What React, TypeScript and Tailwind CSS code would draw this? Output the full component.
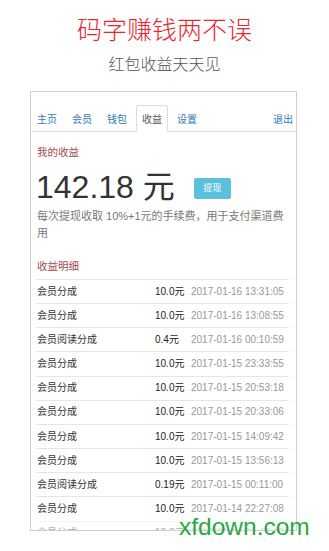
import React from 'react'

const rows = [
  { name: '会员分成', amount: '10.0元', time: '2017-01-16 13:31:05' },
  { name: '会员分成', amount: '10.0元', time: '2017-01-16 13:08:55' },
  { name: '会员阅读分成', amount: '0.4元', time: '2017-01-16 00:10:59' },
  { name: '会员分成', amount: '10.0元', time: '2017-01-15 23:33:55' },
  { name: '会员分成', amount: '10.0元', time: '2017-01-15 20:53:18' },
  { name: '会员分成', amount: '10.0元', time: '2017-01-15 20:33:06' },
  { name: '会员分成', amount: '10.0元', time: '2017-01-15 14:09:42' },
  { name: '会员分成', amount: '10.0元', time: '2017-01-15 13:56:13' },
  { name: '会员阅读分成', amount: '0.19元', time: '2017-01-15 00:11:00' },
  { name: '会员分成', amount: '10.0元', time: '2017-01-14 22:27:08' },
  { name: '会员分成', amount: '10.0元', time: '2017-01-14 21:40:12' },
]

const tabs = ['主页', '会员', '钱包', '收益', '设置']

export default function App() {
  return (
    <div className="relative w-[329px] h-[551px] overflow-hidden bg-white font-['Liberation_Sans','Noto_Sans_CJK_SC',sans-serif]">
      {/* Header */}
      <h1 className="pt-[15px] text-center text-[25px] leading-[30px] font-light text-[#e8262f]">码字赚钱两不误</h1>
      <p className="mt-[9.5px] text-center text-[16px] leading-[20px] font-light text-[#555]">红包收益天天见</p>

      {/* Card */}
      <div className="ml-[30px] mt-[16.5px] w-[267px] h-[440px] overflow-hidden border border-[#cfcfcf] bg-white">
        {/* Nav tabs */}
        <div className="flex items-end pt-[13px] pr-[3px] border-b border-[#dddddd]">
          <div className="flex gap-[3px]">
            {tabs.map((t) => (
              <span
                key={t}
                className={
                  t === '收益'
                    ? 'h-[27px] -mb-px px-[5px] pt-[2px] flex items-center text-[10px] text-[#555] bg-white border border-[#dddddd] border-b-white rounded-t-[3px]'
                    : 'h-[27px] -mb-px px-[5px] pt-[2px] flex items-center text-[10px] text-[#337ab7] border border-transparent'
                }
              >
                {t}
              </span>
            ))}
          </div>
          <span className="ml-auto h-[26px] pt-[2px] flex items-center text-[10px] text-[#337ab7]">退出</span>
        </div>

        <div className="px-[5px]">
          {/* Balance */}
          <h3 className="mt-[13px] pl-[1px] text-[10.5px] leading-[14px] text-[#a0494c]">我的收益</h3>
          <div className="mt-[12px] flex items-start">
            <span className="text-[32px] leading-[32px] text-[#333]">142.18 元</span>
            <button className="ml-[19px] mt-[7px] w-[37px] h-[21px] rounded-[2px] bg-[#5bc0de] text-white text-[9px] leading-[21px]">提现</button>
          </div>
          <p className="mt-[5px] pl-[1px] w-[253px] text-[11px] leading-[16.5px] text-[#777]">
            每次提现收取 10%+1元的手续费，用于支付渠道费用
          </p>

          {/* Details */}
          <h3 className="mt-[18px] pl-[1px] text-[10.5px] leading-[14px] text-[#a0494c]">收益明细</h3>
          <div className="mt-[6px] mr-[2px]">
            {rows.map((r, i) => (
              <div
                key={i}
                className={`h-[24.17px] grid grid-cols-[118px_36px_1fr] items-center pl-[1px] border-t border-[#e6e6e6] text-[10px] leading-[12px] ${i === 10 ? 'opacity-40' : ''}`}
              >
                <span className="text-[#333]">{r.name}</span>
                <span className="text-[#222]">{r.amount}</span>
                <span className="text-[#999]">{r.time}</span>
              </div>
            ))}
          </div>
        </div>
      </div>

      {/* Watermark */}
      <span className="absolute left-[179px] top-[513px] text-[24.5px] leading-[28px] text-[#29a844]">xfdown.com</span>
    </div>
  )
}
